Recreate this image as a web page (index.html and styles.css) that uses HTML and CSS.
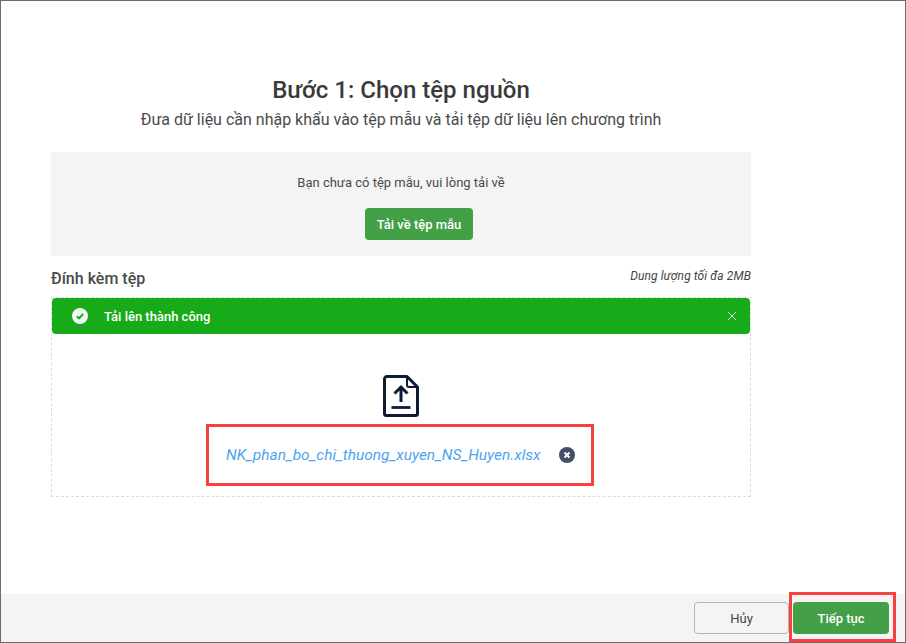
FILE: index.html
```html
<!DOCTYPE html>
<html lang="vi">
<head>
<meta charset="utf-8">
<title>Bước 1: Chọn tệp nguồn</title>
<link rel="stylesheet" href="styles.css">
</head>
<body>
<div class="dialog">
  <main class="content">
    <section class="step">
      <h1 class="title">Bước 1: Chọn tệp nguồn</h1>
      <p class="subtitle">Đưa dữ liệu cần nhập khẩu vào tệp mẫu và tải tệp dữ liệu lên chương trình</p>
      <div class="template">
        <p class="template-text">Bạn chưa có tệp mẫu, vui lòng tải về</p>
        <button class="btn btn-primary btn-template">Tải về tệp mẫu</button>
      </div>
      <div class="attach-head">
        <span class="attach-label">Đính kèm tệp</span>
        <span class="attach-limit">Dung lượng tối đa 2MB</span>
      </div>
      <div class="dropzone">
        <div class="banner">
          <svg class="banner-icon" width="16" height="16" viewBox="0 0 16 16"><circle cx="8" cy="8" r="8" fill="#f4f6f4"/><path d="M4.8 8.2l2.2 2.2 4.2-4.4" fill="none" stroke="#17ab19" stroke-width="2"/></svg>
          <span class="banner-text">Tải lên thành công</span>
          <svg class="banner-close" width="10" height="10" viewBox="0 0 10 10"><path d="M1 1l8 8M9 1l-8 8" stroke="#d5efd5" stroke-width="1"/></svg>
        </div>
        <div class="upload">
          <svg class="upload-icon" width="36" height="42" viewBox="0 0 36 42"><path d="M4 1.500h20l10.500 10.500v26.500a2 2 0 0 1-2 2H3.500a2 2 0 0 1-2-2V4a2.500 2.500 0 0 1 2.500-2.500z" fill="none" stroke="#0f1a35" stroke-width="3" stroke-linejoin="round"/><path d="M24 2.500v7.500a2 2 0 0 0 2 2h8" fill="none" stroke="#0f1a35" stroke-width="2"/><path d="M18 27V12.500M11.500 18.500L18 12l6.500 6.500" fill="none" stroke="#0f1a35" stroke-width="3"/><path d="M8.500 32.500h19" stroke="#0f1a35" stroke-width="2.800"/></svg>
          <div class="file">
            <span class="file-name">NK_phan_bo_chi_thuong_xuyen_NS_Huyen.xlsx</span>
            <svg class="file-remove" width="16" height="16" viewBox="0 0 16 16"><circle cx="8" cy="8" r="8" fill="#444f66"/><path d="M5.500 5.500l5 5M10.500 5.500l-5 5" stroke="#fff" stroke-width="2"/></svg>
          </div>
        </div>
      </div>
    </section>
  </main>
  <footer class="footer">
    <button class="btn btn-cancel">Hủy</button>
    <button class="btn btn-primary btn-next">Tiếp tục</button>
    <span class="highlight"></span>
  </footer>
</div>
</body>
</html>
```
FILE: styles.css
```css
* { box-sizing: border-box; }
html, body { margin: 0; height: 100%; }
body { font-family: Roboto, "Noto Sans", sans-serif; color: #333; background: #fff; }
.dialog {
  width: 906px; height: 643px; display: flex; flex-direction: column;
  border: 1px solid #6f6a6c; background: #fff;
}
.content { flex: 1; padding-top: 74px; padding-left: 50px; }
.step { width: 700px; display: flex; flex-direction: column; }
.title { margin: 0; font-size: 24px; line-height: 30px; font-weight: 500; color: #3a3a3a; text-align: center; }
.subtitle { margin: 3px 0 0; font-size: 16px; line-height: 24px; color: #4a4a4a; text-align: center; }
.template {
  margin-top: 20px; height: 104px; background: #f4f4f4;
  display: flex; flex-direction: column; align-items: center; padding-top: 22px;
}
.template-text { margin: 0; font-size: 13px; line-height: 18px; color: #4a4a4a; }
.btn { font-family: inherit; border-radius: 4px; cursor: pointer; padding: 0; }
.btn-primary { background: #43a047; color: #fff; border: 0; font-weight: 500; }
.btn-template { margin: 16px 0 0 36px; width: 108px; height: 32px; font-size: 13px; }
.attach-head { margin-top: 12px; height: 29px; display: flex; justify-content: space-between; align-items: flex-start; }
.attach-label { font-size: 16px; line-height: 21px; font-weight: 500; color: #4a4a4a; }
.attach-limit { font-size: 12px; line-height: 16px; font-style: italic; color: #444; letter-spacing: 0.09px; }
.dropzone {
  height: 200px; border: 1px dashed #ddd; display: flex; flex-direction: column;
}
.banner {
  height: 36px; background: #17ab19; border-radius: 4px; color: #fff;
  display: flex; align-items: center; padding: 0 13px 0 20px;
}
.banner-text { margin-left: 16px; font-size: 13px; font-weight: 500; flex: 1; }
.upload { display: flex; flex-direction: column; align-items: center; padding-top: 41px; }
.upload-icon { display: block; }
.file {
  margin: 7px 0 0 -2px; width: 388px; height: 62px; border: 3px solid #f74040;
  display: flex; align-items: center; padding-left: 17px;
}
.file-name { font-size: 15.45px; font-style: italic; color: #4ea4f0; }
.file-remove { margin-left: 18px; }
.footer {
  position: relative; height: 48px; background: #f4f4f4;
  display: flex; justify-content: flex-end; align-items: center; gap: 4px;
  padding: 0 15px 0 0;
}
.btn-cancel {
  width: 95px; height: 32px; background: #f4f4f4; border: 1px solid #b5b5b5;
  font-size: 13px; color: #444;
}
.btn-next { width: 96px; height: 32px; font-size: 13px; margin-right: 1px; }
.highlight {
  position: absolute; left: 788px; top: -2px; width: 107px; height: 50px;
  border: 3px solid #f74040; pointer-events: none;
}
```
